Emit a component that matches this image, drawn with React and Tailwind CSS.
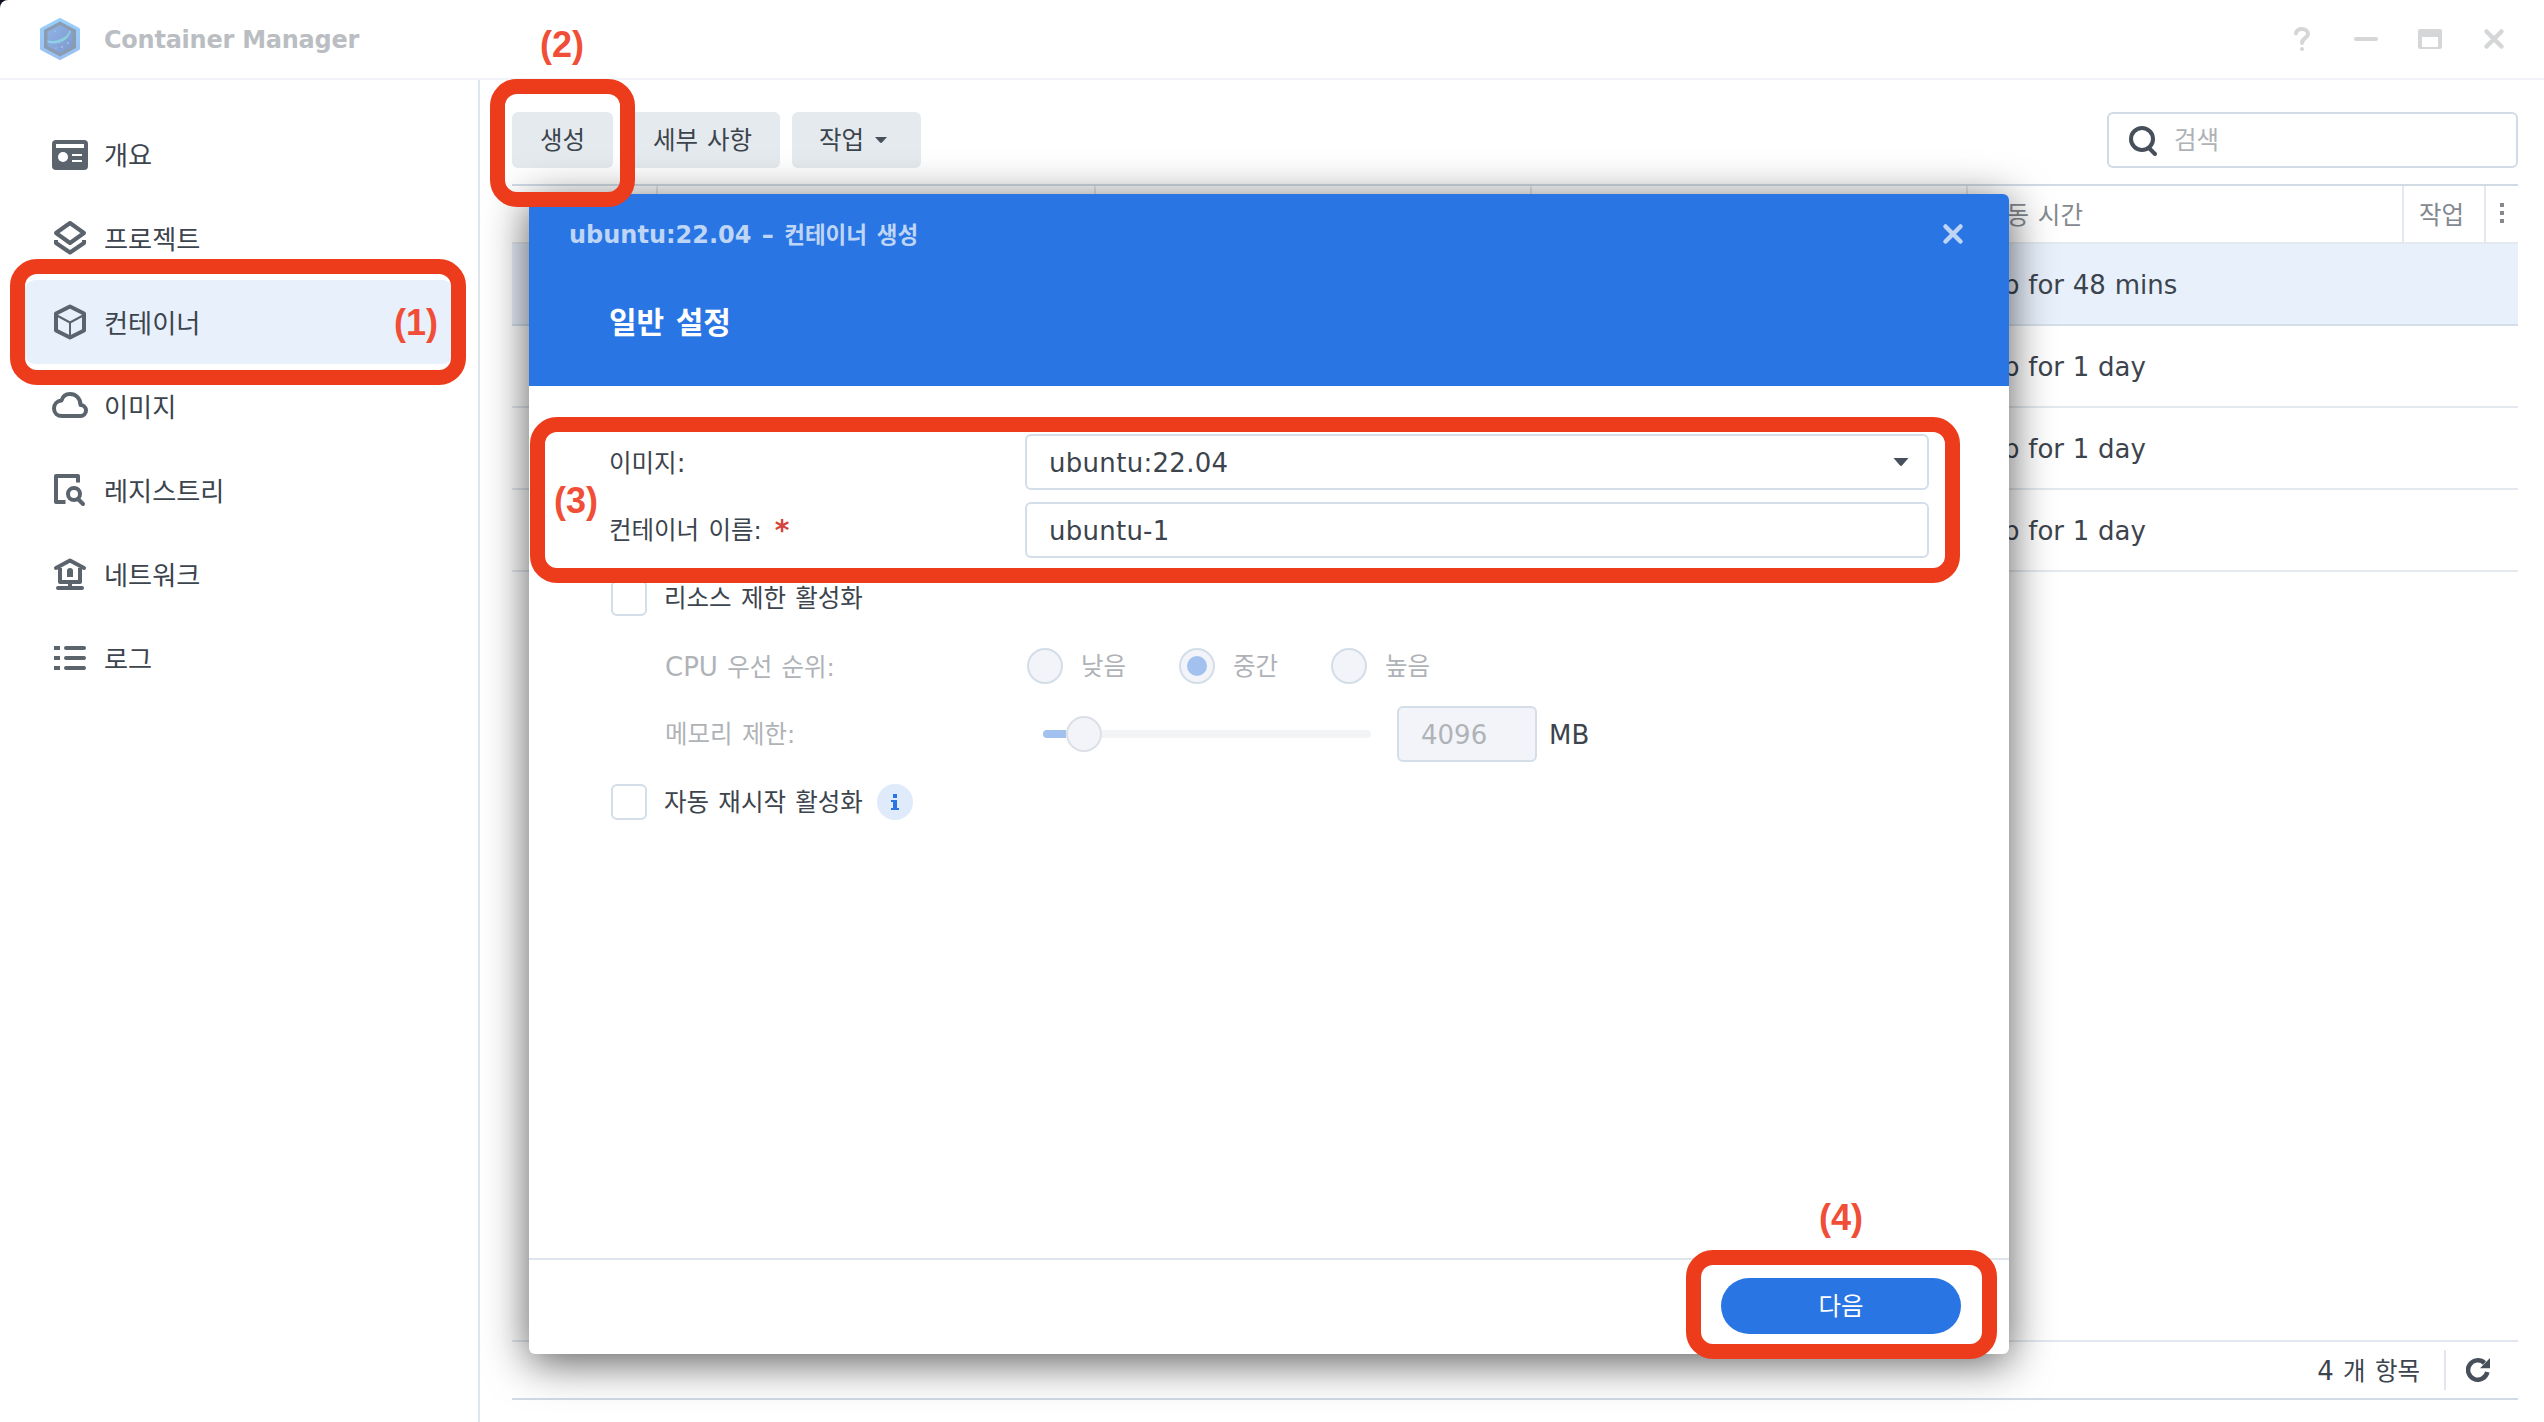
import React from 'react';

const menu = [
  { label: '개요', icon: OverviewIcon },
  { label: '프로젝트', icon: ProjectIcon },
  { label: '컨테이너', icon: ContainerIcon, active: true },
  { label: '이미지', icon: ImageIcon },
  { label: '레지스트리', icon: RegistryIcon },
  { label: '네트워크', icon: NetworkIcon },
  { label: '로그', icon: LogIcon },
];

const rows = [
  { id: 1, uptime: 'Up for 48 mins', selected: true },
  { id: 2, uptime: 'Up for 1 day' },
  { id: 3, uptime: 'Up for 1 day' },
  { id: 4, uptime: 'Up for 1 day' },
];

function Logo() {
  return (
    <svg width="42" height="46" viewBox="0 0 42 46">
      <defs>
        <linearGradient id="rim" x1="0" y1="0" x2="0" y2="1">
          <stop offset="0" stopColor="#98d0fb" />
          <stop offset="1" stopColor="#9cc0f2" />
        </linearGradient>
        <linearGradient id="core" x1="0" y1="0" x2="1" y2="1">
          <stop offset="0" stopColor="#8fb4e4" />
          <stop offset="1" stopColor="#7f98cf" />
        </linearGradient>
        <linearGradient id="glow" x1="0" y1="0" x2="1" y2="0">
          <stop offset="0" stopColor="#8fd0f0" />
          <stop offset="1" stopColor="#8ccbd6" />
        </linearGradient>
      </defs>
      <path d="M21 4 L39 13.500 V32.500 L21 42 L3 32.500 V13.500 Z" fill="url(#rim)" stroke="url(#rim)" strokeWidth="4" strokeLinejoin="round" />
      <path d="M21 5.500 L37 14 V32 L21 40.500 L5 32 V14 Z" fill="#8b9cb0" />
      <path d="M21 9 L33.500 15.800 V30 L21 37.300 L8.500 30 V15.800 Z" fill="url(#core)" />
      <path d="M8.500 24.500 C19 26.500 28.500 21 30.500 14.200 L31.800 14.900 C30.500 24 19 30 8.500 26.500 Z" fill="url(#glow)" />
      <g fill="#c4e2fa">
        <circle cx="16" cy="15" r="0.600" />
        <circle cx="23" cy="31" r="0.700" />
        <circle cx="29" cy="27" r="0.700" />
        <circle cx="17" cy="32" r="0.600" />
      </g>
    </svg>
  );
}

function OverviewIcon() {
  return (
    <svg width="36" height="36" viewBox="0 0 36 36">
      <rect x="0" y="4" width="36" height="30" rx="4" fill="#5b636d" />
      <rect x="4" y="8" width="28" height="4" fill="#fff" />
      <circle cx="11" cy="21" r="5" fill="#fff" />
      <rect x="20" y="18" width="10" height="2" fill="#fff" />
      <rect x="20" y="24" width="10" height="2" fill="#fff" />
    </svg>
  );
}

function ProjectIcon() {
  return (
    <svg width="36" height="36" viewBox="0 0 36 36" fill="none" stroke="#5b636d" strokeWidth="4" strokeLinejoin="round">
      <path d="M18 3 L32 13 L18 23 L4 13 Z" />
      <path d="M4 20 V23 L18 32.500 L32 23 V20" />
    </svg>
  );
}

function ContainerIcon() {
  return (
    <svg width="36" height="36" viewBox="0 0 36 36" fill="none" stroke="#5b636d" strokeLinejoin="round">
      <path d="M18 2.500 L32 9.500 V26.500 L18 33.500 L4 26.500 V9.500 Z" strokeWidth="4" />
      <path d="M4 11 L18 18.500 L32 11 M18 18.500 V33" strokeWidth="2" />
    </svg>
  );
}

function ImageIcon() {
  return (
    <svg width="36" height="36" viewBox="0 0 36 36" fill="none" stroke="#5b636d" strokeWidth="4" strokeLinejoin="round">
      <path d="M10 28 H28.500 A5.500 5.500 0 0 0 28.500 17 C28.500 10 23.500 6 18 6 C13.500 6 10.500 9 9.500 12.500 C5 13 2 16.500 2 20.500 C2 25 5.500 28 10 28 Z" />
    </svg>
  );
}

function RegistryIcon() {
  return (
    <svg width="36" height="36" viewBox="0 0 36 36" fill="none" stroke="#5b636d" strokeWidth="4">
      <path d="M13.500 30 H4 V4 H26 V10.500" strokeLinejoin="round" />
      <circle cx="22" cy="22" r="6" />
      <path d="M26 27 L31 32" strokeLinecap="round" />
    </svg>
  );
}

function NetworkIcon() {
  return (
    <svg width="36" height="36" viewBox="0 0 36 36" fill="none" stroke="#5b636d" strokeWidth="4" strokeLinejoin="round">
      <path d="M4 12 L18 4.500 L32 12" strokeLinecap="round" />
      <path d="M8 12 V26 H28 V12" />
      <path d="M18 27 V31" />
      <path d="M6 32 H30" strokeLinecap="round" />
      <path d="M15 21 V15 A3 3 0 0 1 21 15 V21 Z" fill="#5b636d" stroke="none" />
    </svg>
  );
}

function LogIcon() {
  return (
    <svg width="36" height="36" viewBox="0 0 36 36" fill="#5b636d">
      {[6, 16, 26].map((y) => (
        <g key={y}>
          <rect x="2" y={y} width="6" height="4" />
          <rect x="12" y={y} width="22" height="4" rx="2" />
        </g>
      ))}
    </svg>
  );
}

function CloseIcon({ color }) {
  return (
    <svg width="22" height="22" viewBox="0 0 22 22" fill="none" stroke={color} strokeWidth="4.500" strokeLinecap="round">
      <path d="M3.500 3.500 L18.500 18.500 M18.500 3.500 L3.500 18.500" />
    </svg>
  );
}

function Header() {
  return (
    <header className="flex h-20 shrink-0 items-center border-b-2 border-[#f1f3f8] pr-[39px] pl-[39px]">
      <Logo />
      <h1 className="ml-[23px] pt-0.5 text-[24px] leading-none font-bold tracking-[-0.25px] text-[#babec2]">
        Container Manager
      </h1>
      {/* Window controls */}
      <div className="ml-auto flex items-center gap-10 text-[#d4d6d8]">
        <svg width="24" height="28" viewBox="0 0 24 28" fill="none" stroke="currentColor" strokeWidth="4" strokeLinecap="round">
          <path d="M6 8.500 C6 2.500 18 2.500 18 9 C18 12.500 12 13.500 12 18" />
          <circle cx="12" cy="24" r="2" fill="currentColor" stroke="none" />
        </svg>
        <svg width="24" height="24" viewBox="0 0 24 24" fill="currentColor">
          <rect x="0" y="10" width="24" height="4" rx="2" />
        </svg>
        <svg className="mr-px" width="24" height="24" viewBox="0 0 24 24" fill="currentColor">
          <path fillRule="evenodd" d="M2 2 H22 A2 2 0 0 1 24 4 V20 A2 2 0 0 1 22 22 H2 A2 2 0 0 1 0 20 V4 A2 2 0 0 1 2 2 Z M4 10 V20 H20 V10 Z" />
        </svg>
        <CloseIcon color="#d4d6d8" />
      </div>
    </header>
  );
}

function Sidebar() {
  return (
    <nav className="w-[480px] shrink-0 border-r-2 border-[#dfe6ee] px-6 pt-8">
      {menu.map(({ label, icon: Icon, active }) => (
        <div
          key={label}
          className={`flex h-[84px] items-center gap-4 rounded-xl pl-7 text-[26.2px] ${active ? 'bg-[#e8f0fc]' : ''}`}
        >
          <Icon />
          <span className="pt-1 leading-none">{label}</span>
        </div>
      ))}
    </nav>
  );
}

function Toolbar() {
  return (
    <div className="flex h-14 gap-3 text-[24.5px]">
      <button className="w-[101px] rounded-md bg-[#e5eaee] pt-[3px]">생성</button>
      <button className="w-[155px] rounded-md bg-[#e5eaee] pt-[3px] [word-spacing:1px]">세부 사항</button>
      <button className="flex w-[129px] items-center rounded-md bg-[#e5eaee] pl-[27px]">
        <span className="pt-[3px]">작업</span>
        <svg className="ml-[11px]" width="12" height="6" viewBox="0 0 12 6" fill="#47505a">
          <path d="M0 0 H12 L7 5.500 Q6 6.300 5 5.500 Z" />
        </svg>
      </button>
      <div className="ml-auto flex w-[411px] items-center rounded-md border-2 border-[#d0dbe6] pl-5">
        <svg width="30" height="34" viewBox="0 0 30 34" fill="none" stroke="#47505a" strokeWidth="4">
          <circle cx="13" cy="16" r="11" />
          <path d="M20 25 L26 31" strokeLinecap="round" />
        </svg>
        <span className="ml-[15px] pt-[3px] text-[#aeb2b6]">검색</span>
      </div>
    </div>
  );
}

function ContainerTable() {
  return (
    <div className="mt-4 flex flex-1 flex-col border-t-2 border-[#d0dbe6]">
      <div className="flex h-[58px] border-b-2 border-[#e3e9ef] text-[24.5px] text-[#84898f]">
        <div className="w-[146px] border-r-2 border-[#e3e9ef]" />
        <div className="w-[438px] border-r-2 border-[#e3e9ef]" />
        <div className="w-[436px] border-r-2 border-[#e3e9ef]" />
        <div className="w-[436px] border-r-2 border-[#e3e9ef]" />
        <div className="flex w-[436px] items-center border-r-2 border-[#e3e9ef] pt-1 pl-4 [word-spacing:1px]">작동 시간</div>
        <div className="flex w-[82px] items-center border-r-2 border-[#e3e9ef] pt-1 pl-[15px]">작업</div>
        <div className="flex flex-1 flex-col items-center justify-center gap-1 pb-0.5">
          <span className="size-1 bg-[#84898f]" />
          <span className="size-1 bg-[#84898f]" />
          <span className="size-1 bg-[#84898f]" />
        </div>
      </div>
      {rows.map((row) => (
        <div
          key={row.id}
          className={`flex h-[82px] items-center border-b-2 pt-0.5 pl-[1472px] text-[26px] [word-spacing:0.500px] ${
            row.selected ? 'border-[#d5dfea] bg-[#e8f0fc]' : 'border-[#e3e9ef]'
          }`}
        >
          {row.uptime}
        </div>
      ))}
      <div className="mt-auto mb-[22px] flex h-[60px] items-center justify-end border-t-2 border-b-2 border-t-[#e1e8ef] border-b-[#d0dbe6] pr-7">
        <span className="pt-0.5 text-[24.5px] leading-none [word-spacing:1.500px]">
          <span className="text-[26px]">4</span> 개 항목
        </span>
        <span className="mr-5 ml-6 h-10 w-0.5 bg-[#e3e6ed]" />
        <svg width="24" height="24" viewBox="0 0 24 24" fill="none" stroke="#47505a" strokeWidth="4.500">
          <path d="M21.300 14 A9.700 9.700 0 1 1 18.500 5" />
          <path d="M24 0 V10.200 H14 Z" fill="#47505a" stroke="none" />
        </svg>
      </div>
    </div>
  );
}

function Radio({ label, checked }) {
  return (
    <label className="flex w-[152px] items-center gap-[18px]">
      <span className="flex size-9 items-center justify-center rounded-full border-2 border-[#d3dee8] bg-[#f2f4f9]">
        {checked && <span className="size-5 rounded-full bg-[#a2c1ee]" />}
      </span>
      <span className="pt-0.5">{label}</span>
    </label>
  );
}

function Checkbox({ label }) {
  return (
    <label className="flex items-center">
      <span className="mr-[17px] ml-px size-9 shrink-0 rounded-md border-2 border-[#d3dee8]" />
      <span className="pt-[3px]">{label}</span>
    </label>
  );
}

function FormRow({ children, className = '' }) {
  return <div className={`flex h-14 items-center ${className}`}>{children}</div>;
}

function CreateDialog() {
  return (
    <div className="absolute top-[194px] left-[529px] flex h-[1160px] w-[1480px] flex-col rounded-md bg-white shadow-[0_8px_44px_rgba(0,0,0,0.65)]">
      <div className="h-48 rounded-t-md bg-[#2975e3] pl-[41px] text-white">
        <div className="flex h-20 items-center justify-between pr-[45px] text-[22.500px] font-bold text-[#bed5f6]">
          <span className="-ml-px pt-0.5 whitespace-pre [word-spacing:2px]">
            <span className="text-[24px]">ubuntu:22.04 – </span>컨테이너 생성
          </span>
          <CloseIcon color="#bed5f6" />
        </div>
        <h2 className="pt-[29px] pl-[39px] text-[30px] leading-[40px] font-bold [word-spacing:1px]">일반 설정</h2>
      </div>

      <div className="flex flex-1 flex-col gap-3 px-20 pt-12 pl-[81px] text-[24.5px] [word-spacing:1.500px]">
        <FormRow>
          <span className="-ml-px w-[416px] pt-0.5">
            이미지<span className="text-[26px]">:</span>
          </span>
          <div className="flex h-14 w-[904px] items-center justify-between rounded-md border-2 border-[#d3dee8] pr-[18px] pl-[22px] text-[26px] tracking-[0.300px]">
            <span className="pt-0.5">ubuntu:22.04</span>
            <svg width="16" height="8" viewBox="0 0 16 8" fill="#47505a">
              <path d="M0.500 0 H15.500 L9 7.500 Q8 8.300 7 7.500 Z" />
            </svg>
          </div>
        </FormRow>
        <FormRow>
          <span className="-ml-px flex w-[416px] items-center pt-0.5">
            컨테이너 이름:
            <span className="ml-[13px] text-[28px] leading-none font-bold text-[#d4443c]">*</span>
          </span>
          <div className="flex h-14 w-[904px] items-center rounded-md border-2 border-[#d3dee8] pt-0.5 pl-[22px] text-[26px] tracking-[0.250px]">
            ubuntu-1
          </div>
        </FormRow>
        <FormRow>
          <Checkbox label="리소스 제한 활성화" />
        </FormRow>
        <FormRow className="pl-[55px] text-[#afb3b7]">
          <span className="w-[362px] pt-0.5">
            <span className="text-[26px]">CPU</span> 우선 순위:
          </span>
          <Radio label="낮음" />
          <Radio label="중간" checked />
          <Radio label="높음" />
        </FormRow>
        <FormRow className="pl-[55px] text-[#afb3b7]">
          <span className="w-[378px] pt-0.5">메모리 제한:</span>
          <div className="flex h-9 w-[328px] items-center">
            <span className="h-2 w-[23px] rounded-l-full bg-[#a2c1ee]" />
            <span className="size-9 rounded-full border-2 border-[#dcdfe6] bg-[#f2f4f9]" />
            <span className="h-2 flex-1 rounded-r-full bg-[#f3f4f5]" />
          </div>
          <div className="ml-[26px] flex h-14 w-[140px] items-center rounded-md border-2 border-[#d3dee8] bg-[#f2f4f9] pt-0.5 pl-[22px] text-[26px]">
            4096
          </div>
          <span className="ml-3 pt-0.5 text-[26px] text-[#3c444d]">MB</span>
        </FormRow>
        <FormRow>
          <Checkbox label="자동 재시작 활성화" />
          <span className="ml-3.5 flex size-9 items-center justify-center rounded-full bg-[#dfeafb]">
            <svg width="10" height="16" viewBox="0 0 10 16" fill="#2975e3">
              <path d="M3 0 H7 V4 H3 Z M1 6 H7 V14 H9 V16 H1 V14 H3 V8 H1 Z" />
            </svg>
          </span>
        </FormRow>
      </div>

      <div className="flex h-24 items-start justify-end border-t-2 border-[#dfe5ec] pt-[18px] pr-12">
        <button className="h-14 w-60 rounded-full bg-[#2975e3] pt-0.5 text-[24.5px] text-white">다음</button>
      </div>
    </div>
  );
}

function Step({ label, box, text }) {
  return (
    <>
      <div className={`absolute rounded-[27px] border-[15px] border-[#ec3c1b] ${box}`} />
      <span className={`absolute font-['Liberation_Sans'] text-[36px] leading-9 font-bold text-[#f04e37] ${text}`}>
        {label}
      </span>
    </>
  );
}

export default function App() {
  return (
    <div className="bg-[#0c1020] font-['DejaVu_Sans','Noto_Sans_CJK_KR',sans-serif] text-[#3c444d]">
      <div className="relative flex h-[1422px] w-[2544px] flex-col overflow-hidden rounded-tl-lg bg-white">
        <Header />
        <div className="flex flex-1">
          <Sidebar />
          <main className="flex flex-1 flex-col pt-8 pr-[26px] pl-8">
            <Toolbar />
            <ContainerTable />
          </main>
        </div>

        <CreateDialog />

        {/* Step markers */}
        <Step label="(1)" box="top-[259px] left-[10px] h-[126px] w-[456px]" text="top-[305px] left-[394px]" />
        <Step label="(2)" box="top-[79px] left-[490px] h-[128px] w-[145px]" text="top-[27px] left-[540px]" />
        <Step label="(3)" box="top-[417px] left-[530px] h-[166px] w-[1430px]" text="top-[483px] left-[554px]" />
        <Step label="(4)" box="top-[1250px] left-[1686px] h-[109px] w-[311px]" text="top-[1200px] left-[1819px]" />
      </div>
    </div>
  );
}
